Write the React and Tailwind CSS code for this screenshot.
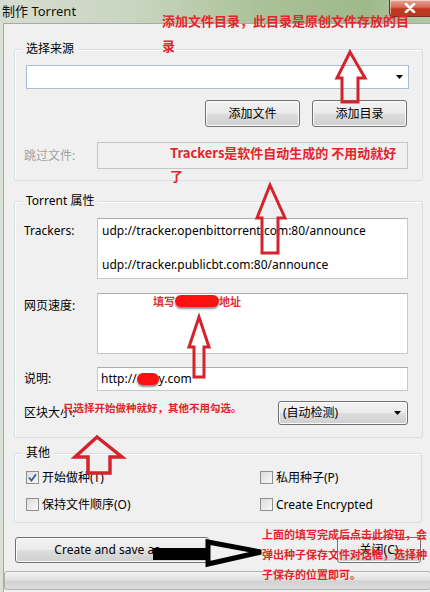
import React from "react";

const face =
  "rounded-[3px] border border-[#707070] bg-[linear-gradient(180deg,#f2f2f2_0%,#ebebeb_48%,#dddddd_52%,#cfcfcf_100%)] shadow-[inset_0_0_0_1px_#fcfcfc]";
const btn = `${face} flex items-center justify-center`;
const field = "border border-[#c3c9d1] border-t-[#abadb3] bg-white";

function Check({ checked }) {
  return (
    <span className="flex h-[13px] w-[13px] shrink-0 items-center justify-center border border-[#8e8f8f] bg-[linear-gradient(135deg,#dcdcdc,#f8f8f8)]">
      {checked && (
        <svg width="9" height="9" viewBox="0 0 9 9">
          <path d="M1 4.5 L3.5 7.5 L8 1.2" fill="none" stroke="#3a5a9e" strokeWidth="1.8" />
        </svg>
      )}
    </span>
  );
}

function Legend({ children }) {
  return (
    <span className="absolute -top-[9px] left-[7px] bg-[#f0f0f0] px-[4px] leading-[16px]">
      {children}
    </span>
  );
}

function Blob({ w }) {
  return (
    <span
      className="inline-block h-[12px] rounded-full bg-[#ff1010] align-middle shadow-[0_2px_2px_rgba(0,0,0,0.45)]"
      style={{ width: w }}
    />
  );
}

function Overlay() {
  const red = "#d4232c";
  return (
    <>
      <svg className="pointer-events-none absolute left-0 top-0" width="430" height="592">
        <g fill="none" stroke={red} strokeWidth="3" strokeLinejoin="miter">
          <polygon points="350,52 365,78 358,78 358,102 342,102 342,78 337,78" />
          <polygon points="270,185 285,218 278,218 278,253 262,253 262,218 257,218" />
          <polygon points="199,317 209,347 204,347 204,377 194,377 194,347 189,347" />
          <polygon points="97,437 122,457 110,457 110,473 88,473 88,457 75,457" strokeWidth="3.5" />
        </g>
        <rect x="153" y="548" width="57" height="12" fill="#000" />
        <polygon points="208,542 261,552 208,564" fill="none" stroke="#000" strokeWidth="5" />
      </svg>

      <div className="pointer-events-none absolute left-[162px] top-[8px] font-['Noto_Sans_CJK_SC',sans-serif] text-[13px] font-bold leading-[25px] text-[#e3262b]">
        <div>添加文件目录，此目录是原创文件存放的目</div>
        <div>录</div>
      </div>
      <div className="pointer-events-none absolute left-[170px] top-[141px] font-['Noto_Sans_CJK_SC',sans-serif] text-[13px] font-bold leading-[23px] text-[#e3262b]">
        <div>Trackers是软件自动生成的 不用动就好</div>
        <div>了</div>
      </div>
      <div className="pointer-events-none absolute left-[153px] top-[293px] flex items-center font-['Noto_Sans_CJK_SC',sans-serif] text-[11px] font-bold leading-[16px] text-[#d6343a]">
        <span>填写</span>
        <Blob w={44} />
        <span>地址</span>
      </div>
      <div className="pointer-events-none absolute left-[63px] top-[400px] font-['Noto_Sans_CJK_SC',sans-serif] text-[10.5px] font-bold leading-[16px] text-[#e3262b]">
        只选择开始做种就好，其他不用勾选。
      </div>
      <div className="pointer-events-none absolute left-[262px] top-[524px] font-['Noto_Sans_CJK_SC',sans-serif] text-[11px] font-bold leading-[20px] text-[#e3262b]">
        <div>上面的填写完成后点击此按钮，会</div>
        <div>弹出种子保存文件对话框，选择种</div>
        <div>子保存的位置即可。</div>
      </div>
    </>
  );
}

export default function App() {
  return (
    <div className="relative flex h-[592px] w-[430px] flex-col overflow-hidden bg-[#d9e1d5] font-['Noto_Sans','Noto_Sans_CJK_SC',sans-serif] text-[12px] text-black">
      {/* title bar */}
      <div className="flex h-[23px] shrink-0 items-start justify-between bg-[linear-gradient(90deg,#d5ddd0_0%,#c9d6c1_30%,#a9c196_62%,#9fb98b_85%,#b4c8a5_100%)]">
        <div className="pl-[2px] pt-[2px] text-[13px] leading-[18px] text-[#111]">制作 Torrent</div>
        <div className="flex h-[17px] w-[41px] items-center justify-center rounded-bl-[4px] border-b border-l border-[#7a2c22] bg-[linear-gradient(180deg,#e9a596_0%,#d36a55_45%,#c2381f_55%,#b83a24_100%)] shadow-[inset_1px_1px_0_rgba(255,255,255,0.5)]">
          <svg width="12" height="10" viewBox="0 0 12 10">
            <path d="M2 1 L10 9 M10 1 L2 9" stroke="#fff" strokeWidth="2.6" strokeLinecap="round" />
          </svg>
        </div>
      </div>

      {/* body */}
      <div className="ml-[3px] flex flex-1 flex-col border-l border-t border-[#a4aaa4] bg-[#f0f0f0]">
        {/* 选择来源 */}
        <div className="relative ml-[10px] mt-[25px] h-[132px] w-[409px] rounded-[3px] border border-[#d5dfe5] pl-[11px] pt-[15px] shadow-[inset_1px_1px_0_#fff]">
          <Legend>选择来源</Legend>
          <div className="flex h-[24px] w-[383px] items-center justify-end border border-[#a9bdd4] bg-white pr-[5px]">
            <svg width="7" height="4" viewBox="0 0 7 4">
              <path d="M0 0 H7 L3.5 4 Z" fill="#000" />
            </svg>
          </div>
          <div className="ml-[179px] mt-[11px] flex gap-[12px]">
            <button className={`${btn} h-[27px] w-[95px]`}>添加文件</button>
            <button className={`${btn} h-[27px] w-[95px]`}>添加目录</button>
          </div>
          <div className="-ml-[2px] mt-[15px] flex items-center">
            <span className="w-[73px] text-[#a0a0a0]">跳过文件:</span>
            <div className="h-[27px] w-[311px] border border-[#c5c5c5] bg-[#f0f0f0]" />
          </div>
        </div>

        {/* Torrent 属性 */}
        <div className="relative ml-[10px] mt-[20px] h-[237px] w-[409px] rounded-[3px] border border-[#d5dfe5] pl-[9px] pt-[16px] shadow-[inset_1px_1px_0_#fff]">
          <Legend>Torrent 属性</Legend>
          <div className="flex items-start">
            <span className="mt-[5px] w-[73px] leading-[16px]">Trackers:</span>
            <div className={`${field} h-[61px] w-[311px] pl-[4px] pt-[3px] leading-[17px]`}>
              <div>udp://tracker.openbittorrent.com:80/announce</div>
              <div>&nbsp;</div>
              <div>udp://tracker.publicbt.com:80/announce</div>
            </div>
          </div>
          <div className="mt-[14px] flex items-start">
            <span className="mt-[5px] w-[73px] leading-[16px]">网页速度:</span>
            <div className={`${field} h-[61px] w-[311px]`} />
          </div>
          <div className="mt-[13px] flex items-center">
            <span className="w-[73px]">说明:</span>
            <div className={`${field} flex h-[24px] w-[311px] items-center pl-[3px]`}>
              <span>http://</span>
              <Blob w={22} />
              <span>y.com</span>
            </div>
          </div>
          <div className="mt-[10px] flex items-center">
            <span className="w-[254px]">区块大小:</span>
            <div className={`${face} flex h-[24px] w-[130px] items-center justify-between pl-[4px] pr-[6px]`}>
              <span>(自动检测)</span>
              <svg width="7" height="4" viewBox="0 0 7 4">
                <path d="M0 0 H7 L3.5 4 Z" fill="#000" />
              </svg>
            </div>
          </div>
        </div>

        {/* 其他 */}
        <div className="relative ml-[10px] mt-[15px] h-[70px] w-[408px] rounded-[3px] border border-[#d5dfe5] pl-[11px] pt-[17px] shadow-[inset_1px_1px_0_#fff]">
          <Legend>其他</Legend>
          <div className="grid grid-cols-[234px_1fr] gap-y-[14px]">
            <label className="flex h-[13px] items-center gap-[3px]">
              <Check checked />
              <span>开始做种(T)</span>
            </label>
            <label className="flex h-[13px] items-center gap-[3px]">
              <Check />
              <span>私用种子(P)</span>
            </label>
            <label className="flex h-[13px] items-center gap-[3px]">
              <Check />
              <span>保持文件顺序(O)</span>
            </label>
            <label className="flex h-[13px] items-center gap-[3px]">
              <Check />
              <span>Create Encrypted</span>
            </label>
          </div>
        </div>

        {/* buttons */}
        <div className="ml-[11px] mt-[14px] flex">
          <button className={`${btn} h-[26px] w-[194px]`}>Create and save as...</button>
          <button className={`${btn} ml-[128px] h-[26px] w-[84px]`}>关闭(C)</button>
        </div>

        {/* progress */}
        <div className="mt-[8px] h-[19px] w-[427px] rounded-[3px] border border-[#b2b2b2] bg-[linear-gradient(180deg,#f3f3f3_0%,#e2e2e2_45%,#d2d2d2_55%,#dcdcdc_100%)]" />
      </div>

      <Overlay />
    </div>
  );
}
